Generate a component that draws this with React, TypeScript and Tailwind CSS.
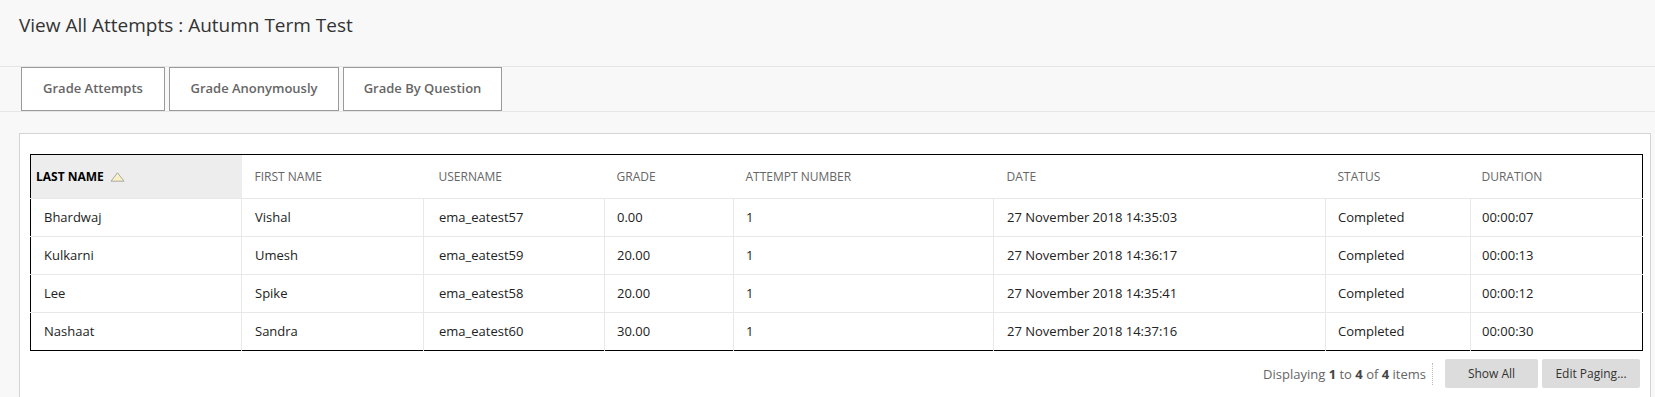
const COLS = [
  { key: 'last', label: 'LAST NAME', width: 211, pad: 'pl-[13px]' },
  { key: 'first', label: 'FIRST NAME', width: 182, pad: 'pl-[13px]' },
  { key: 'user', label: 'USERNAME', width: 181, pad: 'pl-[15px]' },
  { key: 'grade', label: 'GRADE', width: 129, pad: 'pl-[12px]' },
  { key: 'attempt', label: 'ATTEMPT NUMBER', width: 260, pad: 'pl-[12px]' },
  { key: 'date', label: 'DATE', width: 332, pad: 'pl-[13px]' },
  { key: 'status', label: 'STATUS', width: 145, pad: 'pl-[12px]' },
  { key: 'duration', label: 'DURATION', width: 172, pad: 'pl-[11px]' },
]

const ROWS = [
  ['Bhardwaj', 'Vishal', 'ema_eatest57', '0.00', '1', '27 November 2018 14:35:03', 'Completed', '00:00:07'],
  ['Kulkarni', 'Umesh', 'ema_eatest59', '20.00', '1', '27 November 2018 14:36:17', 'Completed', '00:00:13'],
  ['Lee', 'Spike', 'ema_eatest58', '20.00', '1', '27 November 2018 14:35:41', 'Completed', '00:00:12'],
  ['Nashaat', 'Sandra', 'ema_eatest60', '30.00', '1', '27 November 2018 14:37:16', 'Completed', '00:00:30'],
]

const TABS = [
  { label: 'Grade Attempts', w: 'w-[144px]' },
  { label: 'Grade Anonymously', w: 'w-[170px]' },
  { label: 'Grade By Question', w: 'w-[159px]' },
]

function SortArrow() {
  return (
    <svg width="15" height="10" viewBox="0 0 15 10" className="ml-[6px] inline-block">
      <path d="M7.5 0.8 L14 9.2 L1 9.2 Z" fill="#fbf0c4" stroke="#a8a8a8" strokeWidth="1" />
    </svg>
  )
}

export default function App() {
  return (
    <div className="min-h-[397px] bg-[#f8f8f8] text-[#333] font-['Open_Sans',sans-serif]">
      {/* Page title */}
      <div className="h-[66px] pl-[19px] pt-[11px]">
        <h1 className="text-[19px] leading-[28px] text-[#333]">View All Attempts : Autumn Term Test</h1>
      </div>

      {/* Action bar */}
      <div className="flex h-[46px] gap-[4px] border-y border-[#e6e6e6] pl-[21px]">
        {TABS.map(t => (
          <button
            key={t.label}
            className={`h-[44px] ${t.w} border border-[#9a9a9a] bg-white text-[13px] font-semibold text-[#666]`}
          >
            {t.label}
          </button>
        ))}
      </div>

      {/* Content panel */}
      <div className="ml-[19px] mr-[4px] mt-[21px] border border-[#d4d4d4] bg-white px-[10px] pb-[10px] pt-[20px]">
        <table className="w-full table-fixed border-collapse border border-black">
          <colgroup>
            {COLS.map(c => (
              <col key={c.key} style={{ width: c.width }} />
            ))}
          </colgroup>
          <thead>
            <tr className="h-[44px] border-b border-[#e8e8e8]">
              {COLS.map((c, i) =>
                i === 0 ? (
                  <th key={c.key} className="bg-[#ededed] pl-[5px] text-left text-[12px] font-bold text-black">
                    <span className="inline-flex items-center">
                      {c.label}
                      <SortArrow />
                    </span>
                  </th>
                ) : (
                  <th key={c.key} className={`${c.pad} text-left text-[12px] font-normal text-[#666]`}>
                    {c.label}
                  </th>
                )
              )}
            </tr>
          </thead>
          <tbody>
            {ROWS.map((r, ri) => (
              <tr key={ri} className="h-[38px] border-b border-[#e8e8e8] last:border-b-0">
                {r.map((v, ci) => (
                  <td
                    key={ci}
                    className={`${COLS[ci].pad} text-[13px] text-[#222] ${ci === 0 ? '' : 'border-l border-[#e8e8e8]'}`}
                  >
                    {v}
                  </td>
                ))}
              </tr>
            ))}
          </tbody>
        </table>

        {/* Paging footer */}
        <div className="mt-[8px] flex items-center justify-end">
          <span className="border-r border-dotted border-[#bbb] pr-[6px] text-[13px] leading-[22px] text-[#666]">
            Displaying <b className="text-[#444]">1</b> to <b className="text-[#444]">4</b> of{' '}
            <b className="text-[#444]">4</b> items
          </span>
          <button className="ml-[12px] h-[29px] w-[93px] rounded-[2px] bg-[#dcdcdc] text-[12px] text-[#333]">
            Show All
          </button>
          <button className="ml-[4px] h-[29px] w-[98px] rounded-[2px] bg-[#dcdcdc] text-[12px] text-[#333]">
            Edit Paging...
          </button>
        </div>
      </div>
    </div>
  )
}
